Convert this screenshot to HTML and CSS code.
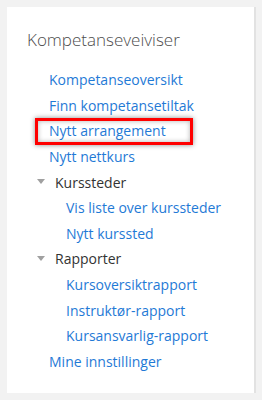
FILE: index.html
```html
<!DOCTYPE html>
<html lang="no">
<head>
<meta charset="utf-8">
<link rel="stylesheet" href="styles.css">
</head>
<body>
<div class="card">
  <h2 class="title">Kompetanseveiviser</h2>
  <ul class="menu">
    <li><a class="link" href="#">Kompetanseoversikt</a></li>
    <li><a class="link" href="#">Finn kompetansetiltak</a></li>
    <li><a class="link highlight" href="#">Nytt arrangement</a></li>
    <li><a class="link" href="#">Nytt nettkurs</a></li>
    <li class="group"><span class="caret"></span><span class="label">Kurssteder</span></li>
    <li class="sub"><a class="link" href="#">Vis liste over kurssteder</a></li>
    <li class="sub"><a class="link" href="#">Nytt kurssted</a></li>
    <li class="group"><span class="caret"></span><span class="label">Rapporter</span></li>
    <li class="sub"><a class="link" href="#">Kursoversiktrapport</a></li>
    <li class="sub"><a class="link" href="#">Instruktør-rapport</a></li>
    <li class="sub"><a class="link" href="#">Kursansvarlig-rapport</a></li>
    <li><a class="link" href="#">Mine innstillinger</a></li>
  </ul>
</div>
</body>
</html>
```
FILE: styles.css
```css
html, body {
  margin: 0;
  padding: 0;
  background: #f2f2f2;
}
body {
  padding: 7px 6px 7px 7px;
  font-family: "Open Sans", "Noto Sans", sans-serif;
}
.card {
  background: #fff;
  height: 386px;
  box-sizing: border-box;
  border-right: 2px solid #e2e2e2;
  padding: 21px 0 0 20px;
}
.title {
  margin: 0;
  font-size: 17px;
  font-weight: 300;
  color: #4d4d4d;
  line-height: 24px;
}
.menu {
  list-style: none;
  margin: 15px 0 0 0;
  padding: 0 0 0 22px;
}
.menu li {
  height: 25.6px;
  display: flex;
  align-items: center;
}
.link {
  color: #1f7ad6;
  text-decoration: none;
  font-size: 14px;
  position: relative;
}
.sub {
  padding-left: 17px;
}
.group {
  margin-left: -12px;
  gap: 10px;
}
.caret {
  width: 0;
  height: 0;
  border-left: 4.5px solid transparent;
  border-right: 4.5px solid transparent;
  border-top: 5px solid #a0a0a0;
  margin-top: -1px;
}
.label {
  font-size: 14px;
  color: #333;
}
.highlight::after {
  content: "";
  position: absolute;
  left: -14px;
  top: -3px;
  width: 158px;
  height: 27px;
  box-sizing: border-box;
  border: 3px solid #f00;
  box-shadow: 0 0 5px rgba(0,0,0,0.45), inset 0 0 5px rgba(0,0,0,0.3);
}
```
